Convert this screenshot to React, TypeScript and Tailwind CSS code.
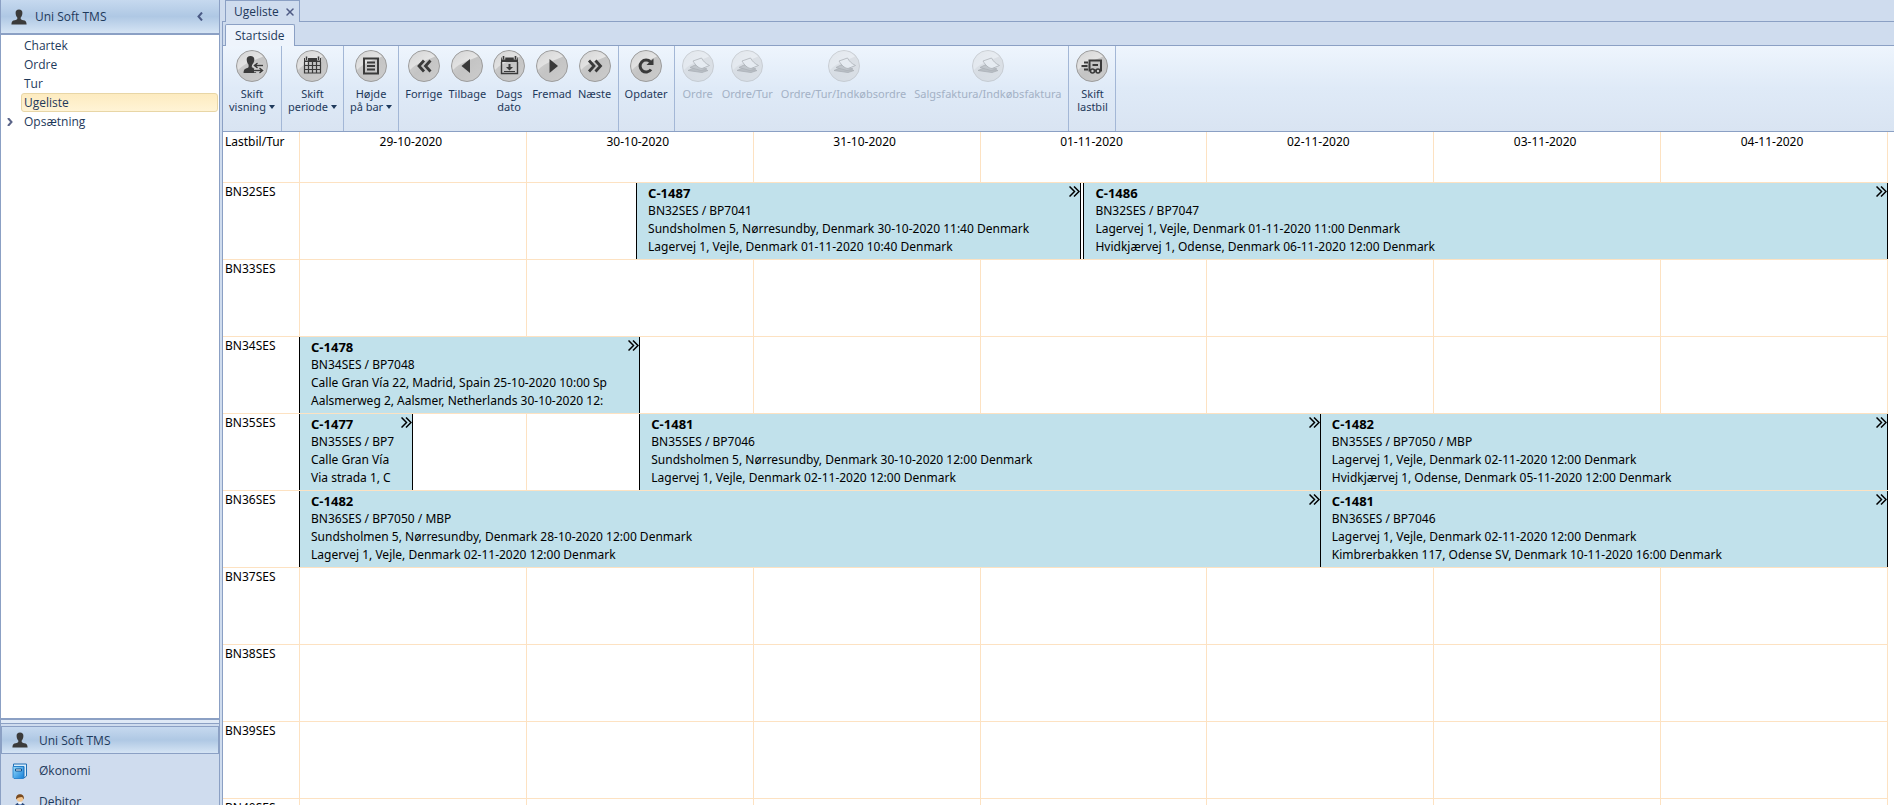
import type { ReactNode } from "react";
import { X } from "lucide-react";

type Bar = { id: string; start: number; end: number; lines: string[] };
type Truck = { name: string; bars: Bar[] };

const days = [
  "29-10-2020",
  "30-10-2020",
  "31-10-2020",
  "01-11-2020",
  "02-11-2020",
  "03-11-2020",
  "04-11-2020",
];

// start and end are counted in days from the left edge of the week
const trucks: Truck[] = [
  {
    name: "BN32SES",
    bars: [
      {
        id: "C-1487",
        start: 1.486,
        end: 3.444,
        lines: [
          "BN32SES / BP7041",
          "Sundsholmen 5, Nørresundby, Denmark 30-10-2020 11:40 Denmark",
          "Lagervej 1, Vejle, Denmark 01-11-2020 10:40 Denmark",
        ],
      },
      {
        id: "C-1486",
        start: 3.458,
        end: 7,
        lines: [
          "BN32SES / BP7047",
          "Lagervej 1, Vejle, Denmark 01-11-2020 11:00 Denmark",
          "Hvidkjærvej 1, Odense, Denmark 06-11-2020 12:00 Denmark",
        ],
      },
    ],
  },
  { name: "BN33SES", bars: [] },
  {
    name: "BN34SES",
    bars: [
      {
        id: "C-1478",
        start: 0,
        end: 1.5,
        lines: [
          "BN34SES / BP7048",
          "Calle Gran Vía 22, Madrid, Spain 25-10-2020 10:00 Sp",
          "Aalsmerweg 2, Aalsmer, Netherlands 30-10-2020 12:",
        ],
      },
    ],
  },
  {
    name: "BN35SES",
    bars: [
      { id: "C-1477", start: 0, end: 0.5, lines: ["BN35SES / BP7", "Calle Gran Vía", "Via strada 1, C"] },
      {
        id: "C-1481",
        start: 1.5,
        end: 4.5,
        lines: [
          "BN35SES / BP7046",
          "Sundsholmen 5, Nørresundby, Denmark 30-10-2020 12:00 Denmark",
          "Lagervej 1, Vejle, Denmark 02-11-2020 12:00 Denmark",
        ],
      },
      {
        id: "C-1482",
        start: 4.5,
        end: 7,
        lines: [
          "BN35SES / BP7050 / MBP",
          "Lagervej 1, Vejle, Denmark 02-11-2020 12:00 Denmark",
          "Hvidkjærvej 1, Odense, Denmark 05-11-2020 12:00 Denmark",
        ],
      },
    ],
  },
  {
    name: "BN36SES",
    bars: [
      {
        id: "C-1482",
        start: 0,
        end: 4.5,
        lines: [
          "BN36SES / BP7050 / MBP",
          "Sundsholmen 5, Nørresundby, Denmark 28-10-2020 12:00 Denmark",
          "Lagervej 1, Vejle, Denmark 02-11-2020 12:00 Denmark",
        ],
      },
      {
        id: "C-1481",
        start: 4.5,
        end: 7,
        lines: [
          "BN36SES / BP7046",
          "Lagervej 1, Vejle, Denmark 02-11-2020 12:00 Denmark",
          "Kimbrerbakken 117, Odense SV, Denmark 10-11-2020 16:00 Denmark",
        ],
      },
    ],
  },
  { name: "BN37SES", bars: [] },
  { name: "BN38SES", bars: [] },
  { name: "BN39SES", bars: [] },
  { name: "BN40SES", bars: [] },
];

function PersonIcon() {
  return (
    <svg className="h-4 w-4 shrink-0" viewBox="0 0 16 16" fill="#3b3b3b" aria-hidden="true">
      <path d="M8 .5c2.3 0 3.5 1.4 3.4 3.4-.1 2-.8 3.600-1.700 4.500v1.500c.6.900 2.200 1 3.900 1.700 1.200.5 1.800 1.500 2 3.900H.4c.2-2.400.8-3.400 2-3.900 1.700-.7 3.300-.8 3.900-1.700V8.400C5.400 7.500 4.700 5.900 4.600 3.900 4.500 1.900 5.700.5 8 .5Z" />
    </svg>
  );
}

function BookIcon() {
  return (
    <svg className="h-4 w-4 shrink-0" viewBox="0 0 16 16" aria-hidden="true">
      <defs>
        <linearGradient id="book" x1="0" y1="0" x2="1" y2="1">
          <stop offset="0" stopColor="#9adcfb" />
          <stop offset="1" stopColor="#1480da" />
        </linearGradient>
      </defs>
      <path d="M1.500 1h13v12l-2.500 2V3.500h-10.500Z" fill="#d9ecfa" stroke="#1f6fb5" strokeWidth="1" />
      <path d="M1 3.500h10.500V15.500H2L1 14.500Z" fill="url(#book)" stroke="#1a78c8" strokeWidth=".8" />
      <path d="M3.500 6h6v2h-6Z" fill="#fff" stroke="#12508c" strokeWidth="1" />
    </svg>
  );
}

function ClerkIcon() {
  return (
    <svg className="h-4 w-4 shrink-0" viewBox="0 0 16 16" aria-hidden="true">
      <circle cx="8" cy="4.500" r="3.300" fill="#f3c690" />
      <path d="M4.200 5.500C3.600 1.800 5.600.2 8 .2s4.400 1.600 3.800 5.300C11 3.800 10.500 3 9.500 3c-1.500.4-4 .1-5.300 2.500Z" fill="#7a4a1e" />
      <path d="M2 16c0-4 1.500-6.500 4-7h4c2.500.5 4 3 4 7Z" fill="#29497c" />
      <path d="M5.800 8.800 8 12.500l2.200-3.700L8 8Z" fill="#fff" />
      <path d="m8 9.500 1 1.500-1 3-1-3Z" fill="#2f6fd0" />
    </svg>
  );
}

function RoundIcon({ children, dim }: { children: ReactNode; dim?: boolean }) {
  return (
    <svg className={dim ? "h-8 w-8 opacity-40" : "h-8 w-8"} viewBox="0 0 32 32" aria-hidden="true">
      <defs>
        <linearGradient id="disc" x1="0" y1="0" x2="1" y2="1">
          <stop offset="0" stopColor="#d6d6d6" />
          <stop offset=".5" stopColor="#c4c4c4" />
          <stop offset="1" stopColor="#cccccc" />
        </linearGradient>
        <linearGradient id="gloss" x1="0" y1="0" x2="1" y2="1">
          <stop offset="0" stopColor="#d4d4d4" />
          <stop offset="1" stopColor="#f0f0f0" />
        </linearGradient>
      </defs>
      <circle cx="16" cy="16" r="15.500" fill="url(#disc)" stroke="#9c9c9c" />
      <path d="M2 20A14.500 14.500 0 0 1 27 6.500C20 10 9 12 2 20Z" fill="url(#gloss)" />
      {children}
    </svg>
  );
}

const ink = "#3a3a3a";

const switchView = (
  <g>
    <path
      d="M14.500 6c2.600 0 3.900 1.500 3.800 3.700-.1 1.900-.8 3.300-1.700 4.300l-1 3 1.500 1 3 2v3H7.500c.1-2.500.6-3.700 2-4.300 1.500-.6 2.700-.8 3.100-1.600v-2.400c-.9-1-1.800-2.900-1.900-5C10.600 7.500 11.900 6 14.500 6Z"
      fill={ink}
    />
    <path
      d="M27 15.500h-8m2.500-2.500-3 2.500 3 2.500M18 20.500h8m-2.500-2.500 3 2.500-3 2.500"
      fill="none"
      stroke="#d8d8d8"
      strokeWidth="3.500"
    />
    <path d="M27 15.500h-8m2.500-2.500-3 2.500 3 2.500M18 20.500h8m-2.500-2.500 3 2.500-3 2.500" fill="none" stroke={ink} strokeWidth="1.500" />
  </g>
);

const calendar = (
  <g>
    <path d="M8 8h17v4H8Z" fill={ink} />
    <path d="M10.500 6v4.500M22.500 6v4.500" stroke="#d8d8d8" strokeWidth="3" />
    <path d="M10.500 6.500v3.500M22.500 6.500v3.500" stroke={ink} strokeWidth="1.400" />
    <path d="M8.500 12v11h16V12M8 15.500h17M8 19.500h17M12.500 11v12M16.500 11v12M20.500 11v12" fill="none" stroke={ink} strokeWidth="1.200" />
  </g>
);

const list = (
  <g fill="none" stroke={ink}>
    <path d="M9 8.500h14v15H9Z" strokeWidth="2" />
    <path d="M12 12.500h8M12 16h8M12 19.500h8" strokeWidth="1.800" />
  </g>
);

const doubleLeft = <path d="m16 10.500-5 5.500 5 5.500m6.500-11-5 5.500 5 5.500" fill="none" stroke={ink} strokeWidth="2.800" />;
const doubleRight = <path d="m10 10.500 5 5.500-5 5.500m6.500-11 5 5.500-5 5.500" fill="none" stroke={ink} strokeWidth="2.800" />;
const left = <path d="M19 9v14l-8.500-7Z" fill={ink} />;
const right = <path d="M13.500 9v14l8.500-7Z" fill={ink} />;

const today = (
  <g>
    <path d="M8 7.500h17V12H8Z" fill={ink} />
    <path d="M10.500 5.500v4M22.500 5.500v4" stroke="#d8d8d8" strokeWidth="3.500" />
    <path d="M10.500 6v3.500M22.500 6v3.500" stroke={ink} strokeWidth="1.600" />
    <path d="M8.500 12v11.500h16V12" fill="none" stroke={ink} strokeWidth="1.400" />
    <path d="M15.500 14h2v3h2.500l-3.500 3.500-3.500-3.500h2.500ZM11 21h11v1H11Z" fill={ink} />
  </g>
);

const refresh = (
  <g>
    <path d="M21 19.500a6 6 0 1 1-.5-7.500" fill="none" stroke={ink} strokeWidth="3" />
    <path d="M23.500 8.500v6.500h-7Z" fill={ink} />
  </g>
);

const papers = (
  <g stroke="#555" strokeLinejoin="round" strokeWidth=".8">
    <path d="m6 20.500 6-2.500 14 2.500-6 2Z" fill="#777" />
    <path d="m8 17.500 5-2.500 12 4-6 1.500Z" fill="#8a8a8a" />
    <path d="m11 11 8.500-3c1.500 3 4 5.500 8 7.500l-7.500 3c-4-.5-6.500-3.500-9-7.500Z" fill="#e4e4e4" />
  </g>
);

const truck = (
  <g fill="none" stroke={ink}>
    <path d="M13.500 20.500V10.500h11.500v10Z" strokeWidth="2" />
    <path d="M8 12.500h4M5.500 16h6M8 19.500h4M16.500 15h5.500" strokeWidth="1.800" />
    <circle cx="16.500" cy="21" r="2" fill="#ccc" strokeWidth="1.600" />
    <circle cx="22" cy="21" r="2" fill="#ccc" strokeWidth="1.600" />
  </g>
);

type Command = { label: string[]; icon: ReactNode; menu?: boolean; disabled?: boolean };

const groups: Command[][] = [
  [{ label: ["Skift", "visning"], icon: switchView, menu: true }],
  [{ label: ["Skift", "periode"], icon: calendar, menu: true }],
  [{ label: ["Højde", "på bar"], icon: list, menu: true }],
  [
    { label: ["Forrige"], icon: doubleLeft },
    { label: ["Tilbage"], icon: left },
    { label: ["Dags", "dato"], icon: today },
    { label: ["Fremad"], icon: right },
    { label: ["Næste"], icon: doubleRight },
  ],
  [{ label: ["Opdater"], icon: refresh }],
  [
    { label: ["Ordre"], icon: papers, disabled: true },
    { label: ["Ordre/Tur"], icon: papers, disabled: true },
    { label: ["Ordre/Tur/Indkøbsordre"], icon: papers, disabled: true },
    { label: ["Salgsfaktura/Indkøbsfaktura"], icon: papers, disabled: true },
  ],
  [{ label: ["Skift", "lastbil"], icon: truck }],
];

function RibbonButton({ label, icon, menu, disabled }: Command) {
  return (
    <button
      type="button"
      disabled={disabled}
      className="flex min-w-10 flex-col items-center px-[3px] text-[11px] leading-[13px] whitespace-nowrap disabled:px-[4px] disabled:text-[#a3b1c5]"
    >
      <RoundIcon dim={disabled}>{icon}</RoundIcon>
      <span className="mt-[5px]">{label[0]}</span>
      {label[1] && (
        <span className="flex items-center gap-[3px]">
          {label[1]}
          {menu && (
            <svg className="h-[4px] w-[6px]" viewBox="0 0 6 4" fill="#1e395b" aria-hidden="true">
              <path d="M0 0h6L3 4Z" />
            </svg>
          )}
        </span>
      )}
    </button>
  );
}

function Sidebar() {
  return (
    <aside className="flex w-[220px] shrink-0 flex-col border-x border-[#8ba0c4] bg-[#cfdcee] font-['Open_Sans','Noto_Sans',sans-serif] text-[12px] leading-[19px] text-[#1e395b]">
      <header className="flex h-[35px] shrink-0 items-center border-b-2 border-[#8ba0c4] bg-linear-to-b from-[#c6d9ef] via-[#afc8e4] to-[#d5e4f4] px-[10px]">
        <PersonIcon />
        <h1 className="ml-2 grow">Uni Soft TMS</h1>
        <button type="button" aria-label="Skjul" className="px-[6px]">
          <svg className="h-[9px] w-[6px]" viewBox="0 0 6 9" fill="none" stroke="#4a5a85" strokeWidth="2" aria-hidden="true">
            <path d="M5 .5 1.500 4.500 5 8.500" />
          </svg>
        </button>
      </header>
      <nav className="min-h-0 grow bg-white py-px">
        {["Chartek", "Ordre", "Tur", "Ugeliste", "Opsætning"].map((name) => (
          <div key={name} className="flex h-[19px] items-center pr-px">
            <span className="flex w-5 shrink-0 justify-center pr-[2px]">
              {name === "Opsætning" && (
                <svg className="h-[8px] w-[6px]" viewBox="0 0 6 8" fill="none" stroke="#5a6488" strokeWidth="2" aria-hidden="true">
                  <path d="m1 0 3.500 4L1 8" />
                </svg>
              )}
            </span>
            <a
              href="#"
              className={
                name === "Ugeliste"
                  ? "grow rounded-[3px] border border-[#e8d6a6] bg-linear-to-b from-[#fdebc0] to-[#fff4d6] px-[2px] leading-[17px]"
                  : "grow border border-transparent px-[2px] leading-[17px]"
              }
            >
              {name}
            </a>
          </div>
        ))}
      </nav>
      <div className="h-[6px] shrink-0 border-t-2 border-b border-[#8ba0c4] bg-[#dfe9f6]" />
      <div className="flex h-[81px] shrink-0 flex-col gap-[2px] overflow-hidden pt-[2px]">
        <a href="#" className="flex h-[28px] shrink-0 items-center gap-[11px] border border-[#8ba0c4] bg-linear-to-b from-[#c6d9ef] via-[#afc8e4] to-[#d5e4f4] px-[10px]">
          <PersonIcon />
          Uni Soft TMS
        </a>
        <a href="#" className="flex h-[29px] shrink-0 items-center gap-[11px] px-[11px]">
          <BookIcon />
          Økonomi
        </a>
        <a href="#" className="flex h-[29px] shrink-0 items-center gap-[11px] px-[11px]">
          <ClerkIcon />
          Debitor
        </a>
      </div>
    </aside>
  );
}

function TripBar({ bar }: { bar: Bar }) {
  const length = bar.end - bar.start;
  // a day spans its cell's padding box (100%) plus its 1px border
  return (
    <div
      className="absolute inset-y-0 z-10 -ml-px overflow-hidden border-x border-black bg-[#c1e1eb] pt-px pl-[11px] leading-[18px] whitespace-nowrap"
      style={{
        left: `calc(${bar.start * 100}% + ${bar.start}px)`,
        width: `calc(${length * 100}% + ${length + 1}px)`,
      }}
    >
      <svg className="absolute top-[3px] right-0 h-[11px] w-[11px]" viewBox="0 0 11 11" fill="none" stroke="#000" strokeWidth="1.500" aria-hidden="true">
        <path d="m.5.500 5 5-5 5M5 .5l5 5-5 5" />
      </svg>
      <div className="text-[13px] leading-[18px] font-bold">{bar.id}</div>
      {bar.lines.map((line) => (
        <div key={line}>{line}</div>
      ))}
    </div>
  );
}

function Schedule() {
  return (
    <div className="min-h-0 grow overflow-hidden bg-white pr-[6px] text-[12px] leading-[18px] text-black">
      <table className="w-full table-fixed border-separate border-spacing-0">
        <thead>
          <tr className="h-[51px]">
            <th className="w-[77px] border-r border-b border-[#fde2c2] px-[2px] pt-px text-left align-top font-normal">Lastbil/Tur</th>
            {days.map((day) => (
              <th key={day} className="border-r border-b border-[#fde2c2] pt-px pr-[4px] align-top font-normal">
                {day}
              </th>
            ))}
          </tr>
        </thead>
        <tbody>
          {trucks.map((t) => (
            <tr key={t.name} className="h-[77px]">
              <th className="border-r border-b border-[#fde2c2] px-[2px] text-left align-top font-normal">{t.name}</th>
              {days.map((day, i) => (
                <td key={day} className="relative border-r border-b border-[#fde2c2] p-0">
                  {i === 0 && t.bars.map((bar) => <TripBar key={bar.id} bar={bar} />)}
                </td>
              ))}
            </tr>
          ))}
        </tbody>
      </table>
    </div>
  );
}

export default function App() {
  return (
    <div className="flex h-screen overflow-hidden bg-[#cfdcee] font-['Noto_Sans','Open_Sans',sans-serif]">
      <Sidebar />
      <main className="ml-[2px] flex min-w-0 grow flex-col text-[#1e395b]">
        <div className="flex h-[22px] shrink-0 items-stretch border-b border-[#8ba0c4] pl-[3px] font-['Open_Sans','Noto_Sans',sans-serif] text-[12px]">
          <div className="-mb-px flex items-center gap-[5px] border border-b-0 border-[#8ba0c4] bg-[#cfdcee] pr-[3px] pl-[8px]">
            Ugeliste
            <button type="button" aria-label="Luk Ugeliste">
              <X className="h-[12px] w-[12px] text-[#4f5b84]" strokeWidth={3} />
            </button>
          </div>
        </div>
        <div className="flex min-h-0 grow flex-col border-l border-[#8ba0c4]">
          <div className="flex h-[24px] shrink-0 items-end border-b border-[#8ba0c4] pl-[2px] font-['Open_Sans','Noto_Sans',sans-serif]">
            <button type="button" className="-mb-px h-[22px] rounded-t-[2px] border border-b-0 border-[#8ba0c4] bg-[#eef4fc] px-[9px] text-[12px]">
              Startside
            </button>
          </div>
          <div className="flex h-[86px] shrink-0 border-b border-[#8ba0c4] bg-linear-to-b from-[#eef5fd] via-[#dfeaf7] to-[#d9e4f2]">
            {groups.map((group) => (
              <div key={group[0].label.join(" ")} className="flex items-start border-r border-[#a3b7d6] px-[3px] pt-[4px]">
                {group.map((command) => (
                  <RibbonButton key={command.label.join(" ")} {...command} />
                ))}
              </div>
            ))}
          </div>
          <Schedule />
        </div>
      </main>
    </div>
  );
}
